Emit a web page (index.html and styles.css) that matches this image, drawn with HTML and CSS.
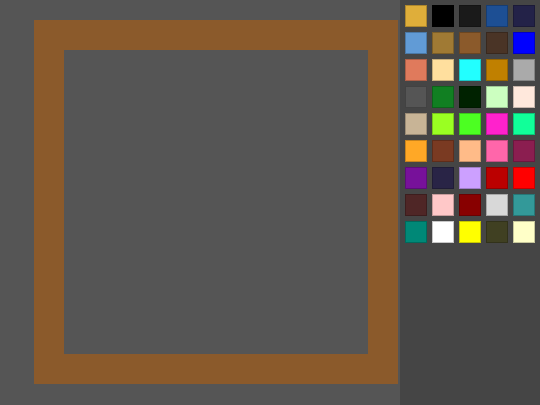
FILE: index.html
```html
<!DOCTYPE html>
<html>
<head>
<meta charset="utf-8">
<link rel="stylesheet" href="styles.css">
</head>
<body>
<div class="app">
  <main class="canvas">
    <div class="frame"></div>
  </main>
  <aside class="palette">
    <div class="grid">
      <span class="sw" style="background:#dfae3a"></span>
      <span class="sw" style="background:#000000"></span>
      <span class="sw" style="background:#1a1a1a"></span>
      <span class="sw" style="background:#1d4f94"></span>
      <span class="sw" style="background:#232248"></span>

      <span class="sw" style="background:#619bd6"></span>
      <span class="sw" style="background:#a07a34"></span>
      <span class="sw" style="background:#8b5a2b"></span>
      <span class="sw" style="background:#4a3426"></span>
      <span class="sw" style="background:#0000ff"></span>

      <span class="sw" style="background:#e07a5c"></span>
      <span class="sw" style="background:#ffdf9e"></span>
      <span class="sw" style="background:#22ffff"></span>
      <span class="sw" style="background:#c08000"></span>
      <span class="sw" style="background:#aaaaaa"></span>

      <span class="sw" style="background:#555555"></span>
      <span class="sw" style="background:#117f22"></span>
      <span class="sw" style="background:#002200"></span>
      <span class="sw" style="background:#ccffc0"></span>
      <span class="sw" style="background:#ffe8dc"></span>

      <span class="sw" style="background:#c8b496"></span>
      <span class="sw" style="background:#9aff22"></span>
      <span class="sw" style="background:#4cff22"></span>
      <span class="sw" style="background:#ff22cc"></span>
      <span class="sw" style="background:#11ff99"></span>

      <span class="sw" style="background:#ffa826"></span>
      <span class="sw" style="background:#7a3a22"></span>
      <span class="sw" style="background:#ffbb88"></span>
      <span class="sw" style="background:#ff66aa"></span>
      <span class="sw" style="background:#8b1e50"></span>

      <span class="sw" style="background:#77119a"></span>
      <span class="sw" style="background:#292446"></span>
      <span class="sw" style="background:#cca0ff"></span>
      <span class="sw" style="background:#bb0000"></span>
      <span class="sw" style="background:#ff0000"></span>

      <span class="sw" style="background:#4f2626"></span>
      <span class="sw" style="background:#ffc8c8"></span>
      <span class="sw" style="background:#880000"></span>
      <span class="sw" style="background:#d8d8d8"></span>
      <span class="sw" style="background:#339999"></span>

      <span class="sw" style="background:#008877"></span>
      <span class="sw" style="background:#ffffff"></span>
      <span class="sw" style="background:#ffff00"></span>
      <span class="sw" style="background:#404022"></span>
      <span class="sw" style="background:#ffffc8"></span>
    </div>
  </aside>
</div>
</body>
</html>
```

FILE: styles.css
```css
html, body {
  margin: 0;
  padding: 0;
}
body {
  background: #555555;
  font-family: "Liberation Sans", Arial, sans-serif;
  width: 540px;
  height: 405px;
  overflow: hidden;
}
.app {
  display: flex;
  width: 540px;
  height: 405px;
}
.canvas {
  width: 400px;
  flex: none;
  padding: 20px 0 0 34px;
  box-sizing: border-box;
}
.frame {
  width: 304px;
  height: 304px;
  border: 30px solid #8b5a2b;
}
.palette {
  flex: 1;
  background: #454545;
  padding: 5px;
  box-sizing: border-box;
  height: 405px;
}
.grid {
  display: grid;
  grid-template-columns: repeat(5, 22px);
  grid-auto-rows: 22px;
  gap: 5px;
}
.sw {
  display: block;
  box-sizing: border-box;
  width: 22px;
  height: 22px;
  box-shadow: inset 0 0 0 1px rgba(0, 0, 0, 0.22);
}
```
